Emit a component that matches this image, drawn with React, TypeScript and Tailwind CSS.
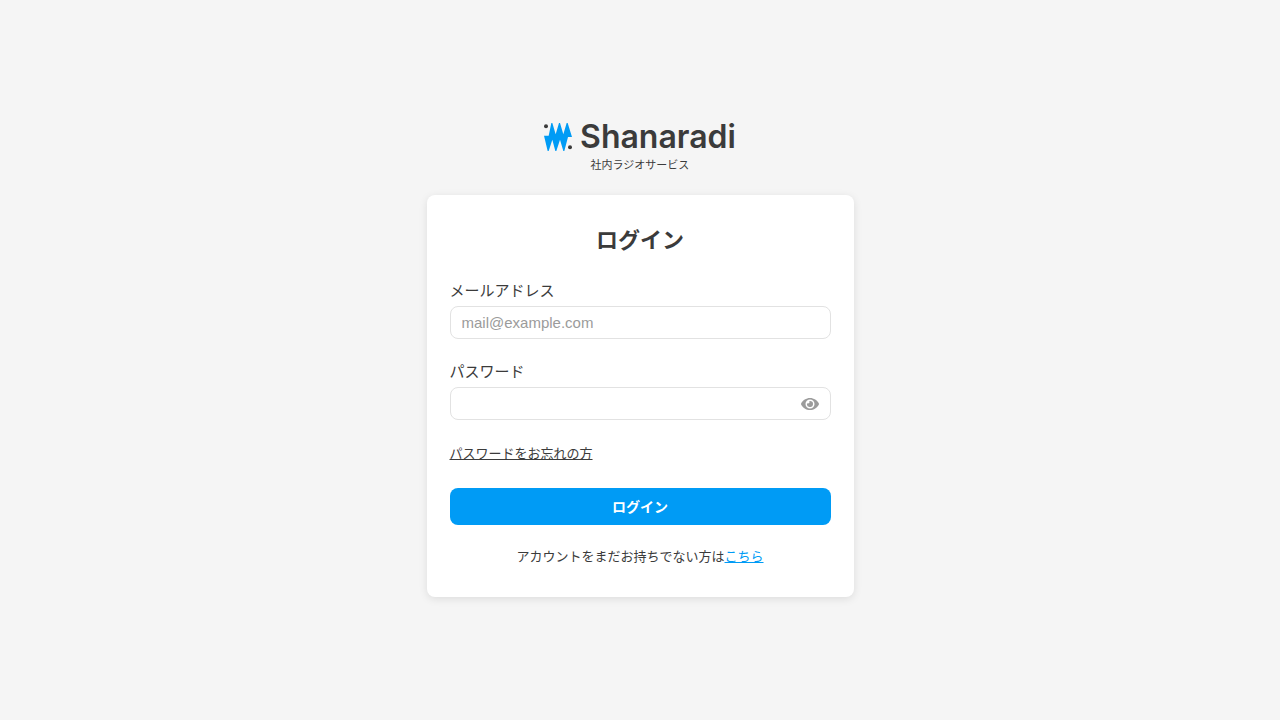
import { useState } from 'react';
import { FaEye, FaEyeSlash } from 'react-icons/fa';

function LogoMark() {
    return (
        <svg className="w-7 h-7" viewBox="0 0 84 84" aria-hidden="true">
            <path
                fill="#009bf5"
                d="M0 38H14L22 0H25L35 34L45 0H48L58 34L68 0H71L84 42H72L61 84H58L48 50L37 84H34L25 50L14 84H11Z"
            />
            <circle cx="6" cy="10" r="6" fill="#3b3b3b" />
            <circle cx="78" cy="73" r="6" fill="#3b3b3b" />
        </svg>
    );
}

export default function App() {
    const [email, setEmail] = useState('');
    const [password, setPassword] = useState('');
    const [showPassword, setShowPassword] = useState(false);

    return (
        <div className="min-h-screen flex flex-col items-center justify-center bg-[#f5f5f5] px-4 text-[#3b3b3b] font-['Liberation_Sans','Noto_Sans_CJK_JP',sans-serif]">
            <header className="flex flex-col items-center mb-[18px]">
                <div className="flex items-center gap-2">
                    <LogoMark />
                    <h1 className="font-['Inter',sans-serif] font-semibold text-[32px] leading-7">Shanaradi</h1>
                </div>
                <p className="mt-0.5 text-[11px] leading-6">社内ラジオサービス</p>
            </header>

            <main className="w-full max-w-[427px] rounded-lg bg-white px-[23px] pt-7 pb-[30px] shadow-[0_2px_8px_rgba(0,0,0,0.1)]">
                <h2 className="text-center text-[22px] leading-9 font-bold">ログイン</h2>

                <form onSubmit={(e) => e.preventDefault()}>
                    <label htmlFor="email" className="block mt-5 text-[15px] leading-6">
                        メールアドレス
                    </label>
                    <input
                        id="email"
                        type="email"
                        placeholder="mail@example.com"
                        value={email}
                        onChange={(e) => setEmail(e.target.value)}
                        className="block w-full h-[33px] mt-[3px] px-[11px] text-[15px] rounded-lg border border-[#e2e2e2] placeholder:text-[#9b9b9b] focus:outline-none focus:border-[#009bf5]"
                    />

                    <label htmlFor="password" className="block mt-[21px] text-[15px] leading-6">
                        パスワード
                    </label>
                    <div className="flex items-center h-[33px] mt-[3px] pr-[11px] rounded-lg border border-[#e2e2e2] focus-within:border-[#009bf5]">
                        <input
                            id="password"
                            type={showPassword ? 'text' : 'password'}
                            value={password}
                            onChange={(e) => setPassword(e.target.value)}
                            className="flex-1 min-w-0 px-[11px] text-[15px] focus:outline-none"
                        />
                        <button
                            type="button"
                            aria-label="パスワードを表示"
                            onClick={() => setShowPassword(!showPassword)}
                            className="text-[18px] text-[#9b9b9b]"
                        >
                            {showPassword ? <FaEyeSlash /> : <FaEye />}
                        </button>
                    </div>

                    <a href="#forgot" className="block w-fit mt-6 text-[13px] leading-5 underline">
                        パスワードをお忘れの方
                    </a>

                    <button
                        type="submit"
                        className="block w-full h-[37px] mt-6 rounded-lg bg-[#009bf5] text-white text-sm font-bold"
                    >
                        ログイン
                    </button>
                </form>

                <p className="mt-[22px] text-center text-[13px] leading-5">
                    アカウントをまだお持ちでない方は
                    <a href="#signup" className="text-[#009bf5] underline">こちら</a>
                </p>
            </main>
        </div>
    );
}
